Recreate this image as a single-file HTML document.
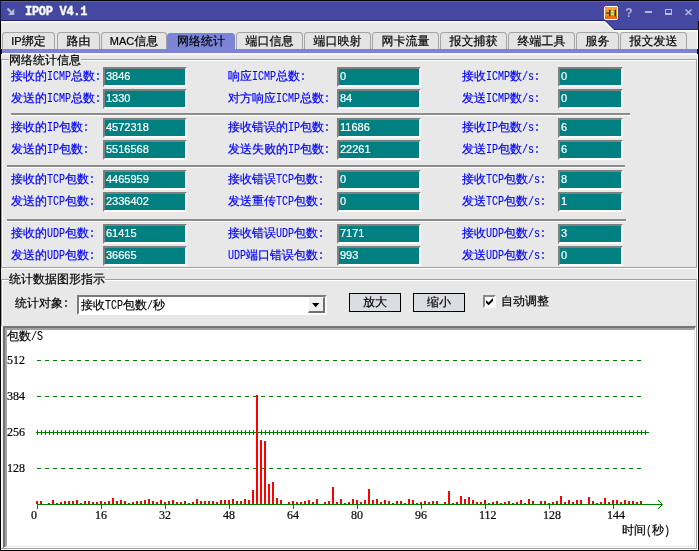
<!DOCTYPE html>
<html lang="zh-CN"><head><meta charset="utf-8"><title>IPOP V4.1</title>
<style>
html,body{margin:0;padding:0}
body{-webkit-text-stroke-width:0.2px;width:699px;height:551px;overflow:hidden;background:#fff;position:relative;font-family:"Liberation Mono","WenQuanYi Zen Hei","Noto Sans CJK SC",monospace;font-size:12px;line-height:12px;color:#000}
#win{will-change:transform;position:absolute;left:0;top:0;width:699px;height:551px;background:#e8e8e8;overflow:hidden}
.a{position:absolute}
.t{position:absolute;white-space:nowrap;height:14px;line-height:14px;font-size:12px}
.l{-webkit-text-stroke-width:0.1px;font-family:"Liberation Mono",monospace;font-size:10px;display:inline-block;transform:scaleY(1.2);transform-origin:0 78%;line-height:10px}
.b{color:#0000ff}
.d{font-family:"Liberation Serif",serif;font-size:12px}
.f{position:absolute;height:16px;border-top:2px solid #808080;border-left:2px solid #808080;border-bottom:2px solid #fff;border-right:2px solid #fff;background:#008080;color:#fff;font-family:"Liberation Sans",sans-serif;font-size:11px;line-height:15px;box-sizing:content-box;text-indent:1px;white-space:nowrap;overflow:hidden}
.tab{position:absolute;top:32px;height:17px;box-sizing:border-box;border:1px solid #a4a4a4;border-bottom:none;border-radius:3.5px 3.5px 0 0;background:#e4e4e4;font-family:"Liberation Sans","WenQuanYi Zen Hei","Noto Sans CJK SC",sans-serif;font-size:12px;line-height:16px;text-align:center;white-space:nowrap}
.tab.on{background:#7c84d8;border-color:#7c84d8;top:33px;height:16px;line-height:14px}
.sep{position:absolute;height:2px;background:#8c8c8c;border-bottom:1px solid #fff}
.gb{position:absolute;border:1px solid #a0a0a0;box-shadow:1px 1px 0 #fff, inset 1px 1px 0 #fff}
.gl{position:absolute;background:#e8e8e8;height:12px;line-height:12px;white-space:nowrap}
.btn{position:absolute;box-sizing:border-box;border:1px solid #000;background:#dcdce4;text-align:center;line-height:18px;height:19px}
</style></head>
<body>
<div id="win">
<svg class="a" style="left:0;top:0" width="699" height="34" viewBox="0 0 699 34">
<polygon points="0,0 699,0 699,30 614,30 605,21 0,21" fill="#4448a0"/>
<polyline points="0,20.5 605.2,20.5 614.2,29.5 699,29.5" fill="none" stroke="#22267e" stroke-width="1"/>
<polyline points="0,21.5 604.8,21.5 613.8,30.5 698,30.5" fill="none" stroke="#fff" stroke-width="1"/>
<polyline points="0,22.5 604.4,22.5 613.4,31.5 698,31.5" fill="none" stroke="#f4f4f4" stroke-width="1"/>
<rect x="0" y="0" width="699" height="1" fill="#000"/>
<rect x="1" y="1" width="698" height="1" fill="#5c60b0"/>
<rect x="0" y="0" width="1" height="21" fill="#181848"/>
<path d="M7.5 8.5 L12.5 13.5" stroke="#b4b8d4" stroke-width="2.2" fill="none"/>
<polygon points="14.3,8.6 14.3,15 8,15" fill="#b4b8d4"/>
<rect x="604" y="6" width="14" height="14" fill="#fff"/>
<path d="M604 6h1v1h-1zM617 6h1v1h-1zM604 19h1v1h-1zM617 19h1v1h-1z" fill="#ff20ff"/>
<rect x="605" y="7" width="12" height="12" fill="#ee8c1e"/>
<rect x="605" y="7" width="12" height="3" fill="#f8a42c"/>
<rect x="605" y="10" width="12" height="3" fill="#f29624"/>
<rect x="605" y="16" width="12" height="3" fill="#e47410"/>
<rect x="606" y="12.4" width="4" height="1.3" fill="#5c3c10"/>
<polygon points="609,9.2 611,10.8 614,10.8 616,9.2 616,16.8 614,15.2 611,15.2 609,16.8" fill="#38301c"/>
<rect x="610.6" y="10.6" width="3.8" height="4.8" fill="#d4e468"/>
<rect x="610.6" y="12.6" width="3.8" height="0.9" fill="#98a048"/>
<g fill="#b8b8dc">
<rect x="645" y="11" width="7" height="2"/>
<path d="M665 9h7v6h-7z M666 10v3h5v-3z" fill-rule="evenodd"/>
</g>
<g stroke="#b8b8dc" stroke-width="1.5" fill="none">
<path d="M685.5 9.5 L691.5 15 M691.5 9.5 L685.5 15"/>
</g>
<text x="625.3" y="17.2" font-family="Liberation Sans, sans-serif" font-weight="bold" font-size="12" fill="#b0b0d8" style="-webkit-text-stroke-width:0">?</text>
</svg>
<div class="a" style="left:25px;top:4.5px;color:#fff;-webkit-text-stroke-width:0.35px;font-family:&quot;Liberation Mono&quot;,monospace;font-weight:bold;font-size:12px;line-height:14px;letter-spacing:-0.3px;white-space:pre">IPOP V4.1</div>
<div class="tab" style="left:2px;width:53px"><span style="font-size:11px">IP</span>绑定</div>
<div class="tab" style="left:57px;width:43px">路由</div>
<div class="tab" style="left:101px;width:66px"><span style="font-size:11px">MAC</span>信息</div>
<div class="tab on" style="left:167px;width:68px">网络统计</div>
<div class="tab" style="left:236px;width:67px">端口信息</div>
<div class="tab" style="left:304px;width:67px">端口映射</div>
<div class="tab" style="left:372px;width:67px">网卡流量</div>
<div class="tab" style="left:440px;width:67px">报文捕获</div>
<div class="tab" style="left:508px;width:67px">终端工具</div>
<div class="tab" style="left:576px;width:43px">服务</div>
<div class="tab" style="left:620px;width:67px">报文发送</div>
<div class="a" style="left:0;top:49px;width:697px;height:4px;background:#7c84d8"></div>
<div class="a" style="left:697px;top:30px;width:1px;height:19px;background:#fff"></div>
<div class="a" style="left:698px;top:21px;width:1px;height:30px;background:#000"></div>
<div class="a" style="left:697px;top:49px;width:2px;height:5px;background:#000"></div>
<div class="a" style="left:697px;top:54px;width:1px;height:496px;background:#fff"></div>
<div class="a" style="left:698px;top:54px;width:1px;height:497px;background:#000"></div>
<div class="a" style="left:0;top:49px;width:2px;height:5px;background:#000"></div>
<div class="a" style="left:2px;top:53px;width:695px;height:2px;background:#f6f6f6"></div>
<div class="a" style="left:0;top:21px;width:1px;height:530px;background:#000"></div>
<div class="gb" style="left:1px;top:59px;width:694px;height:207px"></div>
<div class="gl" style="left:9px;top:55px">网络统计信息</div>
<div class="t b" style="left:11px;top:70px">接收的<span class="l">ICMP</span>总数<span class="l">:</span></div><div class="f" style="left:103px;top:67px;width:80px">3846</div>
<div class="t b" style="left:228px;top:70px">响应<span class="l">ICMP</span>总数<span class="l">:</span></div><div class="f" style="left:337px;top:67px;width:80px">0</div>
<div class="t b" style="left:462px;top:70px">接收<span class="l">ICMP</span>数<span class="l">/s:</span></div><div class="f" style="left:558px;top:67px;width:61px">0</div>
<div class="t b" style="left:11px;top:92px">发送的<span class="l">ICMP</span>总数<span class="l">:</span></div><div class="f" style="left:103px;top:89px;width:80px">1330</div>
<div class="t b" style="left:228px;top:92px">对方响应<span class="l">ICMP</span>总数<span class="l">:</span></div><div class="f" style="left:337px;top:89px;width:80px">84</div>
<div class="t b" style="left:462px;top:92px">发送<span class="l">ICMP</span>数<span class="l">/s:</span></div><div class="f" style="left:558px;top:89px;width:61px">0</div>
<div class="t b" style="left:11px;top:121px">接收的<span class="l">IP</span>包数<span class="l">:</span></div><div class="f" style="left:103px;top:118px;width:80px">4572318</div>
<div class="t b" style="left:228px;top:121px">接收错误的<span class="l">IP</span>包数<span class="l">:</span></div><div class="f" style="left:337px;top:118px;width:80px">11686</div>
<div class="t b" style="left:462px;top:121px">接收<span class="l">IP</span>包数<span class="l">/s:</span></div><div class="f" style="left:558px;top:118px;width:61px">6</div>
<div class="t b" style="left:11px;top:143px">发送的<span class="l">IP</span>包数<span class="l">:</span></div><div class="f" style="left:103px;top:140px;width:80px">5516568</div>
<div class="t b" style="left:228px;top:143px">发送失败的<span class="l">IP</span>包数<span class="l">:</span></div><div class="f" style="left:337px;top:140px;width:80px">22261</div>
<div class="t b" style="left:462px;top:143px">发送<span class="l">IP</span>包数<span class="l">/s:</span></div><div class="f" style="left:558px;top:140px;width:61px">6</div>
<div class="t b" style="left:11px;top:173px">接收的<span class="l">TCP</span>包数<span class="l">:</span></div><div class="f" style="left:103px;top:170px;width:80px">4465959</div>
<div class="t b" style="left:228px;top:173px">接收错误<span class="l">TCP</span>包数<span class="l">:</span></div><div class="f" style="left:337px;top:170px;width:80px">0</div>
<div class="t b" style="left:462px;top:173px">接收<span class="l">TCP</span>包数<span class="l">/s:</span></div><div class="f" style="left:558px;top:170px;width:61px">8</div>
<div class="t b" style="left:11px;top:195px">发送的<span class="l">TCP</span>包数<span class="l">:</span></div><div class="f" style="left:103px;top:192px;width:80px">2336402</div>
<div class="t b" style="left:228px;top:195px">发送重传<span class="l">TCP</span>包数<span class="l">:</span></div><div class="f" style="left:337px;top:192px;width:80px">0</div>
<div class="t b" style="left:462px;top:195px">发送<span class="l">TCP</span>包数<span class="l">/s:</span></div><div class="f" style="left:558px;top:192px;width:61px">1</div>
<div class="t b" style="left:11px;top:227px">接收的<span class="l">UDP</span>包数<span class="l">:</span></div><div class="f" style="left:103px;top:224px;width:80px">61415</div>
<div class="t b" style="left:228px;top:227px">接收错误<span class="l">UDP</span>包数<span class="l">:</span></div><div class="f" style="left:337px;top:224px;width:80px">7171</div>
<div class="t b" style="left:462px;top:227px">接收<span class="l">UDP</span>包数<span class="l">/s:</span></div><div class="f" style="left:558px;top:224px;width:61px">3</div>
<div class="t b" style="left:11px;top:249px">发送的<span class="l">UDP</span>包数<span class="l">:</span></div><div class="f" style="left:103px;top:246px;width:80px">36665</div>
<div class="t b" style="left:228px;top:249px"><span class="l">UDP</span>端口错误包数<span class="l">:</span></div><div class="f" style="left:337px;top:246px;width:80px">993</div>
<div class="t b" style="left:462px;top:249px">发送<span class="l">UDP</span>包数<span class="l">/s:</span></div><div class="f" style="left:558px;top:246px;width:61px">0</div>
<div class="sep" style="left:11px;top:113px;width:619px"></div>
<div class="sep" style="left:7px;top:165px;width:618px"></div>
<div class="sep" style="left:7px;top:219px;width:619px"></div>
<div class="gb" style="left:1px;top:279px;width:694px;height:268px"></div>
<div class="gl" style="left:9px;top:274px">统计数据图形指示</div>
<div class="t" style="left:15px;top:297px">统计对象<span class="l">:</span></div>
<div class="a" style="left:77px;top:295px;width:246px;height:16px;border:2px solid;border-color:#7c7c7c #fff #fff #7c7c7c;background:#fff"></div>
<div class="t" style="left:81px;top:299px">接收<span class="l">TCP</span>包数<span class="l">/</span>秒</div>
<div class="a" style="left:308px;top:297px;width:14px;height:13px;background:#f0f0f0;border-style:solid;border-width:1px 2px 2px 1px;border-color:#fff #707070 #707070 #fff"></div>
<svg class="a" style="left:311px;top:302px" width="10" height="7"><polygon points="1,1 8.4,1 4.7,5.2" fill="#000"/></svg>
<div class="btn" style="left:349px;top:293px;width:52px">放大</div>
<div class="btn" style="left:413px;top:293px;width:52px">缩小</div>
<div class="a" style="left:483px;top:295px;width:9px;height:9px;border:2px solid;border-color:#888 #fff #fff #888;background:#fff"></div>
<svg class="a" style="left:485px;top:297px" width="9" height="9"><polygon points="1,3 3.5,5.5 8,1 8,4 3.5,8.2 1,5.8" fill="#000"/></svg>
<div class="t" style="left:501px;top:295px">自动调整</div>
<div class="a" style="left:3px;top:326px;width:693px;height:222px;background:#fff;box-sizing:border-box;border-style:solid;border-width:2px 1px 1px 2px;border-color:#747474 #fff #fff #747474"></div>
<div class="a" style="left:5px;top:328px;width:690px;height:219px;box-sizing:border-box;border-style:solid;border-width:2px 1px 1px 2px;border-color:#a2a2a2 #e4e4e4 #e4e4e4 #a2a2a2"></div>
<div class="a" style="left:1px;top:326px;width:1px;height:222px;background:#fff"></div>
<div class="a" style="left:2px;top:326px;width:1px;height:222px;background:#ececec"></div>
<div class="a" style="left:1px;top:548px;width:696px;height:1px;background:#a0a0a0"></div>
<div class="a" style="left:1px;top:549px;width:697px;height:1px;background:#fff"></div>
<div class="a" style="left:0;top:550px;width:699px;height:1px;background:#000"></div>
<svg class="a" style="left:0;top:326px" width="697" height="222" viewBox="0 326 697 222" shape-rendering="crispEdges"><line x1="37" y1="360.5" x2="641" y2="360.5" stroke="#008000" stroke-width="1" stroke-dasharray="4 4"/><line x1="37" y1="396.5" x2="641" y2="396.5" stroke="#008000" stroke-width="1" stroke-dasharray="4 4"/><line x1="37" y1="468.5" x2="641" y2="468.5" stroke="#008000" stroke-width="1" stroke-dasharray="4 4"/><line x1="36" y1="432.5" x2="649" y2="432.5" stroke="#008000" stroke-width="1"/><path d="M37.5 430v5M41.5 430v5M45.5 430v5M49.5 430v5M53.5 430v5M57.5 430v5M61.5 430v5M65.5 430v5M69.5 430v5M73.5 430v5M77.5 430v5M81.5 430v5M85.5 430v5M89.5 430v5M93.5 430v5M97.5 430v5M101.5 430v5M105.5 430v5M109.5 430v5M113.5 430v5M117.5 430v5M121.5 430v5M125.5 430v5M129.5 430v5M133.5 430v5M137.5 430v5M141.5 430v5M145.5 430v5M149.5 430v5M153.5 430v5M157.5 430v5M161.5 430v5M165.5 430v5M169.5 430v5M173.5 430v5M177.5 430v5M181.5 430v5M185.5 430v5M189.5 430v5M193.5 430v5M197.5 430v5M201.5 430v5M205.5 430v5M209.5 430v5M213.5 430v5M217.5 430v5M221.5 430v5M225.5 430v5M229.5 430v5M233.5 430v5M237.5 430v5M241.5 430v5M245.5 430v5M249.5 430v5M253.5 430v5M257.5 430v5M261.5 430v5M265.5 430v5M269.5 430v5M273.5 430v5M277.5 430v5M281.5 430v5M285.5 430v5M289.5 430v5M293.5 430v5M297.5 430v5M301.5 430v5M305.5 430v5M309.5 430v5M313.5 430v5M317.5 430v5M321.5 430v5M325.5 430v5M329.5 430v5M333.5 430v5M337.5 430v5M341.5 430v5M345.5 430v5M349.5 430v5M353.5 430v5M357.5 430v5M361.5 430v5M365.5 430v5M369.5 430v5M373.5 430v5M377.5 430v5M381.5 430v5M385.5 430v5M389.5 430v5M393.5 430v5M397.5 430v5M401.5 430v5M405.5 430v5M409.5 430v5M413.5 430v5M417.5 430v5M421.5 430v5M425.5 430v5M429.5 430v5M433.5 430v5M437.5 430v5M441.5 430v5M445.5 430v5M449.5 430v5M453.5 430v5M457.5 430v5M461.5 430v5M465.5 430v5M469.5 430v5M473.5 430v5M477.5 430v5M481.5 430v5M485.5 430v5M489.5 430v5M493.5 430v5M497.5 430v5M501.5 430v5M505.5 430v5M509.5 430v5M513.5 430v5M517.5 430v5M521.5 430v5M525.5 430v5M529.5 430v5M533.5 430v5M537.5 430v5M541.5 430v5M545.5 430v5M549.5 430v5M553.5 430v5M557.5 430v5M561.5 430v5M565.5 430v5M569.5 430v5M573.5 430v5M577.5 430v5M581.5 430v5M585.5 430v5M589.5 430v5M593.5 430v5M597.5 430v5M601.5 430v5M605.5 430v5M609.5 430v5M613.5 430v5M617.5 430v5M621.5 430v5M625.5 430v5M629.5 430v5M633.5 430v5M637.5 430v5M641.5 430v5M645.5 430v5" stroke="#008000" stroke-width="1" fill="none"/><line x1="37" y1="504.5" x2="662" y2="504.5" stroke="#008000" stroke-width="1"/><path d="M37.5 504v5M101.5 504v5M165.5 504v5M229.5 504v5M293.5 504v5M357.5 504v5M421.5 504v5M485.5 504v5M549.5 504v5M613.5 504v5" stroke="#008000" stroke-width="1" fill="none"/><path d="M658 500 L662.5 504.5 L658 509" stroke="#008000" stroke-width="1" fill="none" shape-rendering="auto"/><path d="M36 501h2v3h-2zM40 501h2v3h-2zM48 503h2v1h-2zM52 500h2v4h-2zM56 503h2v1h-2zM60 502h2v2h-2zM64 501h2v3h-2zM68 501h2v3h-2zM72 501h2v3h-2zM76 500h2v4h-2zM80 503h2v1h-2zM84 501h2v3h-2zM88 501h2v3h-2zM92 502h2v2h-2zM96 502h2v2h-2zM100 501h2v3h-2zM104 502h2v2h-2zM108 501h2v3h-2zM112 498h2v6h-2zM116 501h2v3h-2zM120 500h2v4h-2zM124 501h2v3h-2zM128 503h2v1h-2zM132 502h2v2h-2zM136 501h2v3h-2zM140 501h2v3h-2zM144 500h2v4h-2zM148 499h2v5h-2zM152 501h2v3h-2zM156 502h2v2h-2zM160 500h2v4h-2zM164 502h2v2h-2zM168 501h2v3h-2zM172 500h2v4h-2zM176 502h2v2h-2zM180 502h2v2h-2zM184 501h2v3h-2zM188 503h2v1h-2zM192 502h2v2h-2zM196 499h2v5h-2zM200 501h2v3h-2zM204 501h2v3h-2zM208 501h2v3h-2zM212 501h2v3h-2zM216 502h2v2h-2zM220 500h2v4h-2zM224 500h2v4h-2zM228 500h2v4h-2zM232 499h2v5h-2zM236 501h2v3h-2zM240 501h2v3h-2zM244 499h2v5h-2zM248 500h2v4h-2zM252 490h2v14h-2zM256 395h2v109h-2zM260 440h2v64h-2zM264 441h2v63h-2zM268 484h2v20h-2zM272 482h2v22h-2zM276 498h2v6h-2zM280 500h2v4h-2zM288 502h2v2h-2zM292 501h2v3h-2zM296 502h2v2h-2zM300 502h2v2h-2zM304 501h2v3h-2zM308 500h2v4h-2zM312 502h2v2h-2zM316 499h2v5h-2zM324 502h2v2h-2zM328 501h2v3h-2zM332 487h2v17h-2zM336 502h2v2h-2zM340 499h2v5h-2zM344 503h2v1h-2zM348 502h2v2h-2zM352 499h2v5h-2zM356 500h2v4h-2zM360 502h2v2h-2zM364 500h2v4h-2zM368 489h2v15h-2zM372 500h2v4h-2zM376 499h2v5h-2zM380 502h2v2h-2zM384 500h2v4h-2zM388 501h2v3h-2zM392 503h2v1h-2zM396 501h2v3h-2zM400 501h2v3h-2zM404 503h2v1h-2zM408 499h2v5h-2zM412 500h2v4h-2zM416 503h2v1h-2zM420 502h2v2h-2zM424 501h2v3h-2zM428 502h2v2h-2zM432 501h2v3h-2zM436 501h2v3h-2zM444 502h2v2h-2zM448 491h2v13h-2zM452 503h2v1h-2zM456 502h2v2h-2zM460 496h2v8h-2zM464 499h2v5h-2zM468 497h2v7h-2zM472 500h2v4h-2zM476 502h2v2h-2zM480 502h2v2h-2zM484 500h2v4h-2zM488 503h2v1h-2zM492 502h2v2h-2zM496 501h2v3h-2zM500 503h2v1h-2zM504 502h2v2h-2zM508 501h2v3h-2zM512 503h2v1h-2zM516 502h2v2h-2zM520 500h2v4h-2zM524 503h2v1h-2zM528 499h2v5h-2zM532 501h2v3h-2zM540 501h2v3h-2zM544 501h2v3h-2zM548 503h2v1h-2zM552 502h2v2h-2zM556 501h2v3h-2zM560 496h2v8h-2zM564 502h2v2h-2zM568 500h2v4h-2zM572 502h2v2h-2zM576 500h2v4h-2zM580 500h2v4h-2zM588 497h2v7h-2zM592 501h2v3h-2zM596 503h2v1h-2zM600 502h2v2h-2zM604 498h2v6h-2zM608 502h2v2h-2zM612 500h2v4h-2zM616 500h2v4h-2zM620 502h2v2h-2zM624 500h2v4h-2zM628 501h2v3h-2zM632 501h2v3h-2zM636 502h2v2h-2zM640 501h2v3h-2z" fill="#ff0000"/></svg>
<div class="t" style="left:7px;top:330px">包数<span class="l">/S</span></div>
<div class="t" style="left:7px;top:353px"><span class="d">512</span></div>
<div class="t" style="left:7px;top:389px"><span class="d">384</span></div>
<div class="t" style="left:7px;top:425px"><span class="d">256</span></div>
<div class="t" style="left:7px;top:461px"><span class="d">128</span></div>
<div class="t" style="left:31px;top:508px"><span class="d">0</span></div>
<div class="t" style="left:95px;top:508px"><span class="d">16</span></div>
<div class="t" style="left:159px;top:508px"><span class="d">32</span></div>
<div class="t" style="left:223px;top:508px"><span class="d">48</span></div>
<div class="t" style="left:287px;top:508px"><span class="d">64</span></div>
<div class="t" style="left:351px;top:508px"><span class="d">80</span></div>
<div class="t" style="left:415px;top:508px"><span class="d">96</span></div>
<div class="t" style="left:479px;top:508px"><span class="d">112</span></div>
<div class="t" style="left:543px;top:508px"><span class="d">128</span></div>
<div class="t" style="left:607px;top:508px"><span class="d">144</span></div>
<div class="t" style="left:622px;top:524px">时间<span class="l">(</span>秒<span class="l">)</span></div>
</div>
</body></html>
